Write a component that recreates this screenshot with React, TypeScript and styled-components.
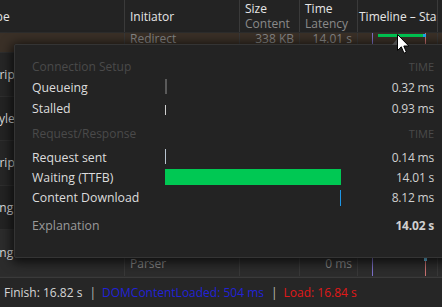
import React from "react";
import styled, { createGlobalStyle } from "styled-components";

const Global = createGlobalStyle`
  html, body { margin: 0; padding: 0; background: #242424; }
  body { font-family: "Open Sans", "Noto Sans", sans-serif; }
  * { box-sizing: border-box; }
`;

const COLS = "125px 115px 60px 58px 80px 4px";

const Page = styled.div`
  position: relative;
  width: 442px;
  height: 307px;
  overflow: hidden;
  display: flex;
  flex-direction: column;
  background: #242424;
  color: #dcdcdc;
  font-size: 12px;
`;

const Header = styled.div`
  display: grid;
  grid-template-columns: ${COLS};
  height: 33px;
  flex: none;
  background: #232323;
  border-bottom: 1px solid #2c2c2c;
`;

const HeadCell = styled.div<{ $indent?: number }>`
  display: flex;
  flex-direction: column;
  justify-content: center;
  padding-left: 5px;
  border-right: 1px solid #3a3a3a;
  overflow: hidden;
  white-space: nowrap;
  line-height: 15px;
  color: #e6e6e6;
  text-indent: ${(p) => p.$indent ?? 0}px;
  &:last-child { border-right: none; }
`;

const TimelineHead = styled(HeadCell)`
  padding-left: 1px;
  font-size: 12px;
`;

const HeadSub = styled.span`
  color: #8a8a8a;
`;

const Body = styled.div`
  flex: 1;
  overflow: hidden;
  display: flex;
  flex-direction: column;
`;

const Row = styled.div<{ $h: number; $bg: string }>`
  display: grid;
  grid-template-columns: ${COLS};
  height: ${(p) => p.$h}px;
  flex: none;
  background: ${(p) => p.$bg};
  border-bottom: 1px solid #2e2e2e;
`;

const Cell = styled.div<{ $align?: string; $indent?: number; $top?: boolean; $bottom?: boolean }>`
  display: flex;
  flex-direction: column;
  justify-content: ${(p) => (p.$top ? "flex-start" : p.$bottom ? "flex-end" : "center")};
  align-items: ${(p) => p.$align ?? "flex-start"};
  padding: 0 5px ${(p) => (p.$bottom ? 5 : 0)}px;
  border-right: 1px solid #383838;
  overflow: hidden;
  white-space: nowrap;
  line-height: ${(p) => (p.$top ? 11 : 14)}px;
  text-indent: ${(p) => p.$indent ?? 0}px;
  position: relative;
  &:last-child { border-right: none; }
`;

const Main = styled.span`
  color: #dedede;
`;

const Dim = styled.span`
  color: #868686;
`;

const Timeline = styled.svg`
  position: absolute;
  left: 0;
  top: 0;
  width: 80px;
  height: 100%;
`;

const StatusBar = styled.div`
  height: 30px;
  flex: none;
  display: flex;
  align-items: center;
  padding-left: 4px;
  background: #262626;
  border-top: 1px solid #3a3a3a;
  font-size: 12px;
  white-space: nowrap;
`;

const Stat = styled.span<{ $c: string }>`
  color: ${(p) => p.$c};
`;

const Sep = styled.span`
  color: #bbbbbb;
  padding: 0 6px 0 7px;
`;

/* Popup */
const Popup = styled.div`
  position: absolute;
  left: 14px;
  top: 44px;
  width: 440px;
  height: 214px;
  background: #232323;
  border: 1px solid #343434;
  border-radius: 2px;
  box-shadow: 0 2px 12px 2px rgba(0, 0, 0, 0.75);
  padding: 10px 19px 0 17px;
  display: grid;
  grid-template-columns: 133px 176px 1fr;
  grid-template-rows: 22px 21px 21px 28px 20px 20px 21px 34px;
  align-items: center;
  z-index: 3;
`;

const Pointer = styled.div`
  position: absolute;
  left: 377px;
  top: -6px;
  width: 0;
  height: 0;
  border-left: 5px solid transparent;
  border-right: 5px solid transparent;
  border-bottom: 6px solid #4a4a4a;
`;

const SectionLabel = styled.div`
  color: #4a4a4a;
`;

const SectionTime = styled.div`
  color: #4a4a4a;
  text-align: right;
  font-size: 11px;
`;

const Label = styled.div<{ $c?: string }>`
  color: ${(p) => p.$c ?? "#dcdcdc"};
  white-space: nowrap;
  font-size: 12.3px;
`;

const Value = styled.div<{ $bold?: boolean }>`
  text-align: right;
  color: #d0d0d0;
  font-weight: ${(p) => (p.$bold ? 700 : 400)};
  letter-spacing: -0.2px;
`;

const BarTrack = styled.div`
  height: 100%;
  display: flex;
  align-items: center;
`;

const Bar = styled.div<{ $c: string; $h: number; $dy?: number }>`
  background: ${(p) => p.$c};
  height: ${(p) => p.$h}px;
  transform: translateY(${(p) => p.$dy ?? 0}px);
`;

const Cursor = styled.svg`
  position: absolute;
  left: 397px;
  top: 34px;
  z-index: 5;
`;

type Phase = { label: string; value: string; color: string; start: number; width: number; h: number; dy?: number };

const TOTAL = 176;

const conn: Phase[] = [
  { label: "Queueing", value: "0.32 ms", color: "#5a5a5a", start: 0, width: 1.5, h: 15, dy: -1 },
  { label: "Stalled", value: "0.93 ms", color: "#d0d0d0", start: 0, width: 1, h: 10, dy: 1 },
];

const reqres: Phase[] = [
  { label: "Request sent", value: "0.14 ms", color: "#b8c4d0", start: 0, width: 1, h: 15, dy: -1 },
  { label: "Waiting (TTFB)", value: "14.01 s", color: "#00c853", start: 0, width: TOTAL, h: 16 },
  { label: "Content Download", value: "8.12 ms", color: "#1e96e6", start: TOTAL - 1, width: 1, h: 16 },
];

function PhaseRow({ p }: { p: Phase }) {
  return (
    <>
      <Label>{p.label}</Label>
      <BarTrack>
        <Bar $c={p.color} $h={p.h} $dy={p.dy} style={{ marginLeft: p.start, width: p.width }} />
      </BarTrack>
      <Value>{p.value}</Value>
    </>
  );
}

type DataRow = {
  type: string;
  indent: number;
  init: string;
  size: string;
  time: string;
  h: number;
  bg: string;
  top?: boolean;
  timeline?: "bar" | "dot";
};

const rows: DataRow[] = [
  { type: "", indent: 0, init: "Redirect", size: "338 KB", time: "14.01 s", h: 20, bg: "#3a3027", top: true, timeline: "bar" },
  { type: "script", indent: -17, init: "", size: "", time: "", h: 44, bg: "#262626" },
  { type: "stylesheet", indent: -16, init: "", size: "", time: "", h: 44, bg: "#232323" },
  { type: "script", indent: -17, init: "", size: "", time: "", h: 45, bg: "#262626" },
  { type: "ping", indent: -16, init: "", size: "", time: "", h: 44, bg: "#232323" },
  { type: "ping", indent: -16, init: "Parser", size: "", time: "0 ms", h: 47, bg: "#2c2c2c", timeline: "dot" },
];

function TimelineCell({ kind }: { kind: "bar" | "dot" }) {
  return (
    <Timeline>
      <line x1="14.5" y1="0" x2="14.5" y2="60" stroke="#7b6fc8" strokeWidth="1" />
      <line x1="67.5" y1="0" x2="67.5" y2="60" stroke="#c87070" strokeWidth="1" />
      {kind === "bar" ? (
        <>
          <rect x="20" y="1" width="45" height="3" fill="#00c853" />
          <rect x="65" y="1" width="3" height="3" fill="#22a8f0" />
        </>
      ) : (
        <rect x="66" y="28" width="3" height="3" fill="#6ac8f0" />
      )}
    </Timeline>
  );
}

export default function App() {
  return (
    <Page>
      <Global />
      <Header>
        <HeadCell $indent={-22}>Type</HeadCell>
        <HeadCell>Initiator</HeadCell>
        <HeadCell>
          Size
          <HeadSub>Content</HeadSub>
        </HeadCell>
        <HeadCell>
          Time
          <HeadSub>Latency</HeadSub>
        </HeadCell>
        <TimelineHead>Timeline – Start Time</TimelineHead>
        <HeadCell />
      </Header>
      <Body>
        {rows.map((r, i) => (
          <Row key={i} $h={r.h} $bg={r.bg}>
            <Cell $indent={r.indent} $top={r.top}>
              <Main>{r.type}</Main>
            </Cell>
            <Cell $top={r.top} $bottom={!r.top}>
              <Dim>{r.init}</Dim>
            </Cell>
            <Cell $align="flex-end" $top={r.top}>
              <Dim>{r.size}</Dim>
            </Cell>
            <Cell $align="flex-end" $top={r.top} $bottom={!r.top}>
              <Dim>{r.time}</Dim>
            </Cell>
            <Cell>{r.timeline && <TimelineCell kind={r.timeline} />}</Cell>
            <Cell />
          </Row>
        ))}
      </Body>
      <StatusBar>
        <Stat $c="#d6d6d6">Finish: 16.82 s</Stat>
        <Sep>|</Sep>
        <Stat $c="#2222d6">DOMContentLoaded: 504 ms</Stat>
        <Sep>|</Sep>
        <Stat $c="#e01818">Load: 16.84 s</Stat>
      </StatusBar>

      <Popup>
        <Pointer />
        <SectionLabel>Connection Setup</SectionLabel>
        <div />
        <SectionTime>TIME</SectionTime>
        {conn.map((p) => (
          <PhaseRow key={p.label} p={p} />
        ))}
        <SectionLabel>Request/Response</SectionLabel>
        <div />
        <SectionTime>TIME</SectionTime>
        {reqres.map((p) => (
          <PhaseRow key={p.label} p={p} />
        ))}
        <Label $c="#9a9a9a">Explanation</Label>
        <div />
        <Value $bold>14.02 s</Value>
      </Popup>

      <Cursor width="13" height="21" viewBox="0 0 13 21">
        <path d="M0.5 0.5 L0.5 16.5 L4.3 12.8 L7 19.2 L9.4 18.2 L6.8 12 L11.8 12 Z" fill="#ffffff" stroke="#000000" strokeWidth="1" strokeLinejoin="round" />
      </Cursor>
    </Page>
  );
}
